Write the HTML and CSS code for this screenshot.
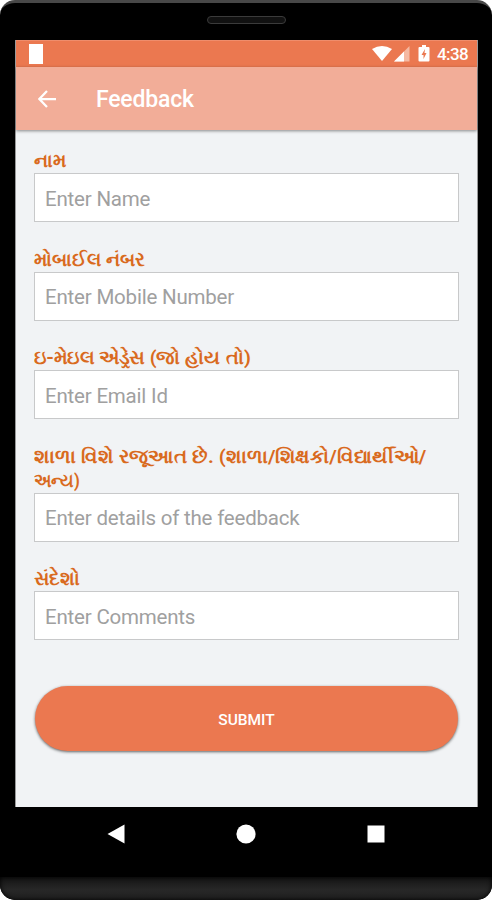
FILE: index.html
```html
<!DOCTYPE html>
<html lang="gu">
<head>
<meta charset="utf-8">
<title>Feedback</title>
<link rel="stylesheet" href="styles.css">
</head>
<body>
<div class="phone">
  <div class="bezel"><span class="speaker"></span></div>
  <main class="screen">
    <div class="status">
      <span class="notice"></span>
      <svg class="signals" width="60" height="20" viewBox="0 0 60 20">
        <path d="M1 5Q11 -1 21 5L11 17Z" fill="#fff"/>
        <path d="M38.500 2V17.500H23Z" fill="#f5b9a2"/>
        <path d="M33 7.500V17.500H23Z" fill="#fff"/>
        <path d="M51 1h4v2h2.500q1 0 1 1v12.500q0 1-1 1h-9q-1 0-1-1V4q0-1 1-1H51Z" fill="#fff"/>
        <path d="M54 5l-3.500 6H52.500v4l3-6H53.500Z" fill="#eb7850"/>
      </svg>
      <span class="clock">4:38</span>
    </div>
    <header class="appbar">
      <svg class="back" width="18" height="18" viewBox="0 0 20 20" fill="none" stroke="#fff" stroke-width="2.500"><path d="M20 10H2.500M10 1L1.500 10L10 19"/></svg>
      <h1>Feedback</h1>
    </header>
    <form class="form">
      <div class="field"><label for="name"><span class="l1">નામ</span></label><input id="name" placeholder="Enter Name"></div>
      <div class="field"><label for="mobile"><span class="l2">મોબાઈલ નંબર</span></label><input id="mobile" placeholder="Enter Mobile Number"></div>
      <div class="field"><label for="email"><span class="l3">ઇ-મેઇલ એડ્રેસ (જો હોય તો)</span></label><input id="email" placeholder="Enter Email Id"></div>
      <div class="field"><label for="details"><span class="l4">શાળા વિશે રજૂઆત છે. (શાળા/શિક્ષકો/વિદ્યાર્થીઓ/</span><br><span class="l5">અન્ય)</span></label><input id="details" placeholder="Enter details of the feedback"></div>
      <div class="field"><label for="comments"><span class="l6">સંદેશો</span></label><input id="comments" placeholder="Enter Comments"></div>
      <button type="button">SUBMIT</button>
    </form>
  </main>
  <nav class="nav">
    <svg width="20" height="20" viewBox="0 0 20 20"><path d="M1.500 10L18.500 .5V19.500Z" fill="#fff"/></svg>
    <svg width="20" height="20" viewBox="0 0 20 20"><circle cx="10" cy="10" r="9.600" fill="#fff"/></svg>
    <svg width="20" height="20" viewBox="0 0 20 20"><rect x="1.500" y="1.500" width="17" height="17" fill="#fff"/></svg>
  </nav>
  <div class="chin"></div>
</div>
</body>
</html>
```
FILE: styles.css
```css
* { box-sizing: border-box; }
body { margin: 0; background: #fff; font-family: Roboto, sans-serif; }
.phone { height: 900px; background: #000; border-top: 3px solid #484848; border-radius: 15px; display: flex; flex-direction: column; overflow: hidden; }
.bezel { height: 37px; flex: none; display: flex; justify-content: center; padding-top: 13px; }
.speaker { width: 79px; height: 8px; border: 1px solid #3b3b3b; border-radius: 4px; background: #111; }
.screen { height: 767px; flex: none; margin: 0 14px 0 15px; background: #f1f3f5; border: solid #999; border-width: 0 1px; }
.status { height: 27px; background: #eb7850; border-top: 1px solid #ef8d6c; display: flex; align-items: center; padding: 0 9px 0 13px; color: #fff; }
.notice { width: 14px; height: 20px; background: #fff; margin-right: auto; }
.signals { margin-right: 6px; }
.clock { font-size: 17px; font-weight: 500; width: 31px; letter-spacing: -.6px; white-space: nowrap; }
.appbar { height: 63px; background: #f2ad98; display: flex; align-items: center; padding-left: 22px; box-shadow: 0 1px 3px rgba(0,0,0,.45); color: #fff; }
.appbar h1 { margin: 2px 0 0 40px; font-size: 23px; font-weight: 500; letter-spacing: -.2px; }
.form { padding: 19px 18px 0; }
.field { margin-bottom: 25.600px; }
label { display: block; line-height: 24px; font-size: 19px; font-weight: 700; color: #d96a1e; white-space: nowrap; }
label span { display: inline-block; height: 24px; vertical-align: top; transform-origin: 0 50%; }
.l3 { transform: scaleX(1.024); }
.l4 { transform: scaleX(1.054); }
.l5 { transform: scaleX(.87); }
input { display: block; width: 100%; height: 49px; border: 1px solid #c8c9ca; border-radius: 0; background: #fff; padding: 2px 10px 0; font: 400 20.500px Roboto, sans-serif; letter-spacing: -.2px; color: #555; outline: 0; }
input::placeholder { color: #a0a0a0; opacity: 1; }
button { display: block; width: calc(100% - 2px); height: 65px; margin: 46px 1px 0; border: 0; border-radius: 33px; background: #eb7850; color: #fff; padding: 2px 0 0; font: 500 15.500px Roboto, sans-serif; box-shadow: 0 1px 3px rgba(0,0,0,.6); }
.nav { height: 70px; display: flex; justify-content: space-between; padding: 17px 106px 0; flex: none; }
.chin { flex: 1; background: linear-gradient(#141414, #272727 55%, #202020); box-shadow: inset 0 0 5px #000; border-radius: 0 0 15px 15px; }
```
